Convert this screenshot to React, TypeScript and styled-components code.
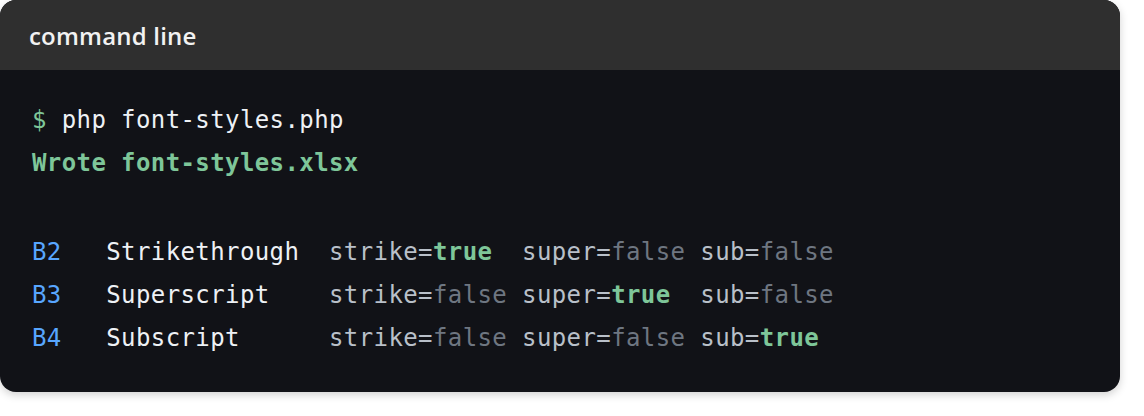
import React from "react";
import styled, { createGlobalStyle } from "styled-components";

const Global = createGlobalStyle`
  html, body { margin: 0; padding: 0; background: #ffffff; }
  body { font-family: "Open Sans", "Noto Sans", sans-serif; }
`;

const Page = styled.div`
  padding: 0 24px 24px 0;
`;

const Card = styled.div`
  width: 1120px;
  border-radius: 16px;
  overflow: hidden;
  background: #111217;
  box-shadow: 0 3px 8px rgba(0, 0, 0, 0.18);
`;

const Header = styled.div`
  height: 70px;
  background: #2f2f2f;
  display: flex;
  align-items: center;
  padding: 0 29px 0;
  box-sizing: border-box;
  color: #f2f2f2;
  font-family: "Open Sans", "Noto Sans", sans-serif;
  font-weight: 600;
  font-size: 24px;
  letter-spacing: 0.2px;
`;

const Body = styled.div`
  padding: 29px 32px 32px;
  font-family: "DejaVu Sans Mono", "Liberation Mono", monospace;
  font-size: 24px;
  letter-spacing: 0.4px;
  line-height: 43px;
  color: #e6edf3;
`;

const Line = styled.div<{ $gap?: boolean }>`
  white-space: pre;
  height: ${(p) => (p.$gap ? "46px" : "43px")};
`;

type Tone = "prompt" | "ok" | "cell" | "key" | "off" | "on" | "text";

const Seg = styled.span<{ $tone: Tone }>`
  color: ${(p) =>
    ({
      prompt: "#7ec699",
      ok: "#7ec699",
      cell: "#58a6ff",
      key: "#b9c0c9",
      off: "#6e7681",
      on: "#7ec699",
      text: "#eef1f5",
    }[p.$tone])};
  font-weight: ${(p) => (p.$tone === "ok" || p.$tone === "on" ? 700 : 400)};
`;

const rows = [
  { cell: "B2", label: "Strikethrough", vals: [true, false, false] },
  { cell: "B3", label: "Superscript", vals: [false, true, false] },
  { cell: "B4", label: "Subscript", vals: [false, false, true] },
];

const keys = ["strike", "super", "sub"];

export default function App() {
  return (
    <>
      <Global />
      <Page>
        <Card>
          <Header>command line</Header>
          <Body>
            <Line>
              <Seg $tone="prompt">$</Seg>
              <Seg $tone="text"> php font-styles.php</Seg>
            </Line>
            <Line>
              <Seg $tone="ok">Wrote font-styles.xlsx</Seg>
            </Line>
            <Line $gap> </Line>
            {rows.map((r) => (
              <Line key={r.cell}>
                <Seg $tone="cell">{r.cell}</Seg>
                <Seg $tone="text">{"   " + r.label.padEnd(15, " ")}</Seg>
                {keys.map((k, i) => (
                  <React.Fragment key={k}>
                    <Seg $tone="key">{k + "="}</Seg>
                    <Seg $tone={r.vals[i] ? "on" : "off"}>{r.vals[i] ? "true" : "false"}</Seg>
                    {i < 2 ? <Seg $tone="text">{r.vals[i] ? "  " : " "}</Seg> : null}
                  </React.Fragment>
                ))}
              </Line>
            ))}
          </Body>
        </Card>
      </Page>
    </>
  );
}
